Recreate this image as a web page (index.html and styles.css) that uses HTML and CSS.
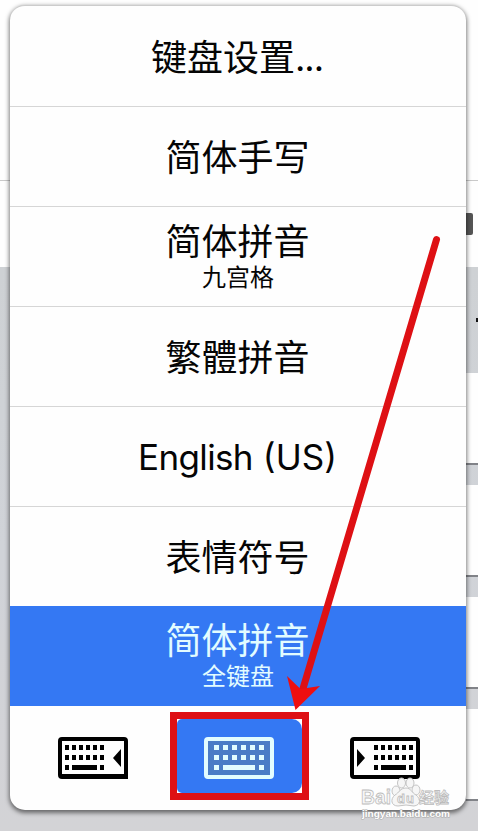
FILE: index.html
```
<!DOCTYPE html>
<html lang="zh-CN">

<head>
    <meta charset="UTF-8">
    <meta name="viewport" content="width=device-width, initial-scale=1.0">
    <title>键盘设置</title>
    <link rel="stylesheet" href="styles.css">
</head>

<body>
    <div class="backdrop">
        <div class="page-top"></div>
        <div class="page-input"><span class="cursor"></span></div>
        <div class="keys">
            <div class="suggest"><span></span></div>
            <div class="key"></div>
            <div class="key"></div>
            <div class="key"></div>
            <div class="key"></div>
        </div>
    </div>

    <div class="menu">
        <div class="item">键盘设置<span class="dots">...</span></div>
        <div class="item">简体手写</div>
        <div class="item double">简体拼音<small>九宫格</small></div>
        <div class="item">繁體拼音</div>
        <div class="item english">English<span class="region">(US)</span></div>
        <div class="item">表情符号</div>
        <div class="item double active">简体拼音<small>全键盘</small></div>
        <div class="layouts">
            <div class="layout">
                <svg width="70" height="42" viewBox="0 0 70 42">
                    <path d="M4 0H66Q70 0 70 4V42H4Q0 42 0 38V4Q0 0 4 0ZM4 4V37H66V4Z" fill-rule="evenodd"/>
                    <path d="M7 10.5H46M7 20.5H46" stroke="#000" stroke-width="5" stroke-dasharray="4 3"/>
                    <path d="M7 28H11V33H7ZM14 28H39V33H14ZM42 28H46V33H42ZM63 12V30L55 21Z"/>
                </svg>
            </div>
            <div class="layout selected">
                <div class="fill">
                    <svg width="70" height="42" viewBox="0 0 70 42">
                        <rect x="2" y="2" width="66" height="38" rx="2" fill="#4a7cc6" stroke="#e2fcff" stroke-width="4"/>
                        <path d="M10 10.5H60M10 20.5H60" stroke="#e2fcff" stroke-width="5" stroke-dasharray="5 4"/>
                        <path d="M10 28H15V33H10ZM19 28H51V33H19ZM55 28H60V33H55Z" fill="#e2fcff"/>
                    </svg>
                </div>
            </div>
            <div class="layout">
                <svg width="70" height="42" viewBox="0 0 70 42">
                    <rect x="2" y="2" width="66" height="38" rx="2" fill="none" stroke="#000" stroke-width="4"/>
                    <path d="M24 10.5H63M24 20.5H63" stroke="#000" stroke-width="5" stroke-dasharray="4 3"/>
                    <path d="M24 28H28V33H24ZM31 28H56V33H31ZM59 28H63V33H59ZM7 12V30L15 21Z"/>
                </svg>
            </div>
        </div>
    </div>

    <svg class="arrow" width="478" height="831" viewBox="0 0 478 831">
        <path d="M436.500 239.500L302 692" stroke="#de1014" stroke-width="7" stroke-linecap="round"/>
        <path d="M287 676L300.500 689L320 686L295.500 710Z" fill="#ee0e10"/>
    </svg>

    <div class="watermark">
        <svg width="94" height="52" viewBox="0 0 94 52">
            <g fill="#f6f6f6" stroke="#c4c4c4" stroke-width="1">
                <ellipse cx="36" cy="21" rx="4" ry="5"/>
                <ellipse cx="41.500" cy="13" rx="4" ry="5"/>
                <ellipse cx="50" cy="13" rx="4" ry="5"/>
                <ellipse cx="56" cy="20" rx="4" ry="5"/>
                <path d="M46 18C40 18 39 23 35 25C30 29 31 36 38 36L46 35L54 36C61 35 61 29 56 25C52 23 51 18 46 18Z"/>
            </g>
            <g class="logo-text">
                <text x="1" y="34" font-size="21" textLength="30" lengthAdjust="spacingAndGlyphs">Bai</text>
                <text x="37" y="33" font-size="13" textLength="17">du</text>
                <text x="59" y="33" font-size="15" textLength="30">经验</text>
            </g>
            <text class="logo-url" x="2" y="47" font-size="9" textLength="88" lengthAdjust="spacingAndGlyphs">jingyan.baidu.com</text>
        </svg>
    </div>
</body>

</html>
```
FILE: styles.css
```
* {
    box-sizing: border-box;
}

body {
    margin: 0;
    position: relative;
    width: 478px;
    height: 831px;
    overflow: hidden;
    background-color: #fefefe;
    font-family: "Inter", "Noto Sans CJK SC", sans-serif;
    color: #050505;
}

/* page behind the menu */
.backdrop {
    height: 831px;
    display: flex;
    flex-direction: column;
}

.page-top {
    height: 181px;
    border-bottom: 1px solid #c9c9c9;
}

.page-input {
    height: 86px;
    padding: 32px 5px 0 0;
    display: flex;
    justify-content: flex-end;
}

.cursor {
    width: 9px;
    height: 22px;
    border-radius: 2px;
    background-color: #555;
}

.keys {
    flex: 1;
    display: flex;
    flex-direction: column;
    align-items: flex-end;
    gap: 20px;
    background: linear-gradient(#ced1d4, #d0d3d8 50%, #d3d3d6);
}

.suggest {
    width: 12px;
    height: 106px;
    margin-bottom: -20px;
    padding-top: 51px;
    display: flex;
    justify-content: flex-end;
}

.suggest span {
    width: 2px;
    height: 4px;
    background-color: #111;
}

.key {
    width: 12px;
    height: 92px;
    background-color: #fefefe;
    border-bottom: 2px solid #818388;
}

.menu {
    position: absolute;
    left: 10px;
    top: 5px;
    width: 456px;
    height: 805px;
    background-color: #fefefe;
    border-top: 1px solid #ccc;
    border-radius: 15px;
    box-shadow: 0 2px 4px 1px rgba(0, 0, 0, 0.5);
}

.item {
    height: 100px;
    display: flex;
    flex-wrap: wrap;
    align-content: center;
    justify-content: center;
    padding: 3px 1px 0 0;
    border-bottom: 1px solid #d6d6d6;
    font-size: 36px;
    line-height: 44px;
}

.item:first-child {
    height: 101px;
    padding: 3px 2px 0 0;
}

.item.double {
    padding: 0 1px 1px 0;
}

.item small {
    width: 100%;
    padding-left: 1px;
    text-align: center;
    font-size: 24px;
    line-height: 28px;
}

.dots {
    width: 28px;
    letter-spacing: -1px;
}

.item.english {
    padding-top: 1px;
    font-size: 35px;
    letter-spacing: -0.65px;
}

.region {
    margin-left: 10px;
    letter-spacing: 0;
}

.item.active {
    background-color: #3478f3;
    border-color: #3478f3;
    color: #e2fcff;
}

.item:nth-child(6) {
    border-bottom: none;
    height: 99px;
}

.layouts {
    height: 103px;
    padding: 0 8px 0 10px;
    display: flex;
    align-items: center;
    justify-content: space-between;
}

.layout {
    width: 146px;
    display: flex;
    justify-content: center;
}

.layout.selected {
    width: 139px;
    height: 88px;
    margin: 0 3px 3px 4px;
    border: 7px solid #de1014;
    background-color: #fefefe;
}

.fill {
    flex: 1;
    display: flex;
    align-items: center;
    justify-content: center;
    padding: 3px 1px 0 0;
    border-radius: 5px 10px 10px 5px;
    background-color: #3478f3;
}

.arrow {
    position: absolute;
    left: 0;
    top: 0;
}

.watermark {
    position: absolute;
    left: 360px;
    top: 770px;
}

.watermark svg {
    display: block;
}

.logo-text {
    font-family: "Liberation Sans", "Noto Sans CJK SC", sans-serif;
    font-weight: bold;
    fill: #f8f8f8;
    stroke: #bcbcbc;
    stroke-width: 0.8px;
}

.logo-url {
    font-family: "Liberation Sans", sans-serif;
    font-weight: bold;
    fill: #fff;
    stroke: #aaa;
    stroke-width: 1px;
    paint-order: stroke;
}
```
